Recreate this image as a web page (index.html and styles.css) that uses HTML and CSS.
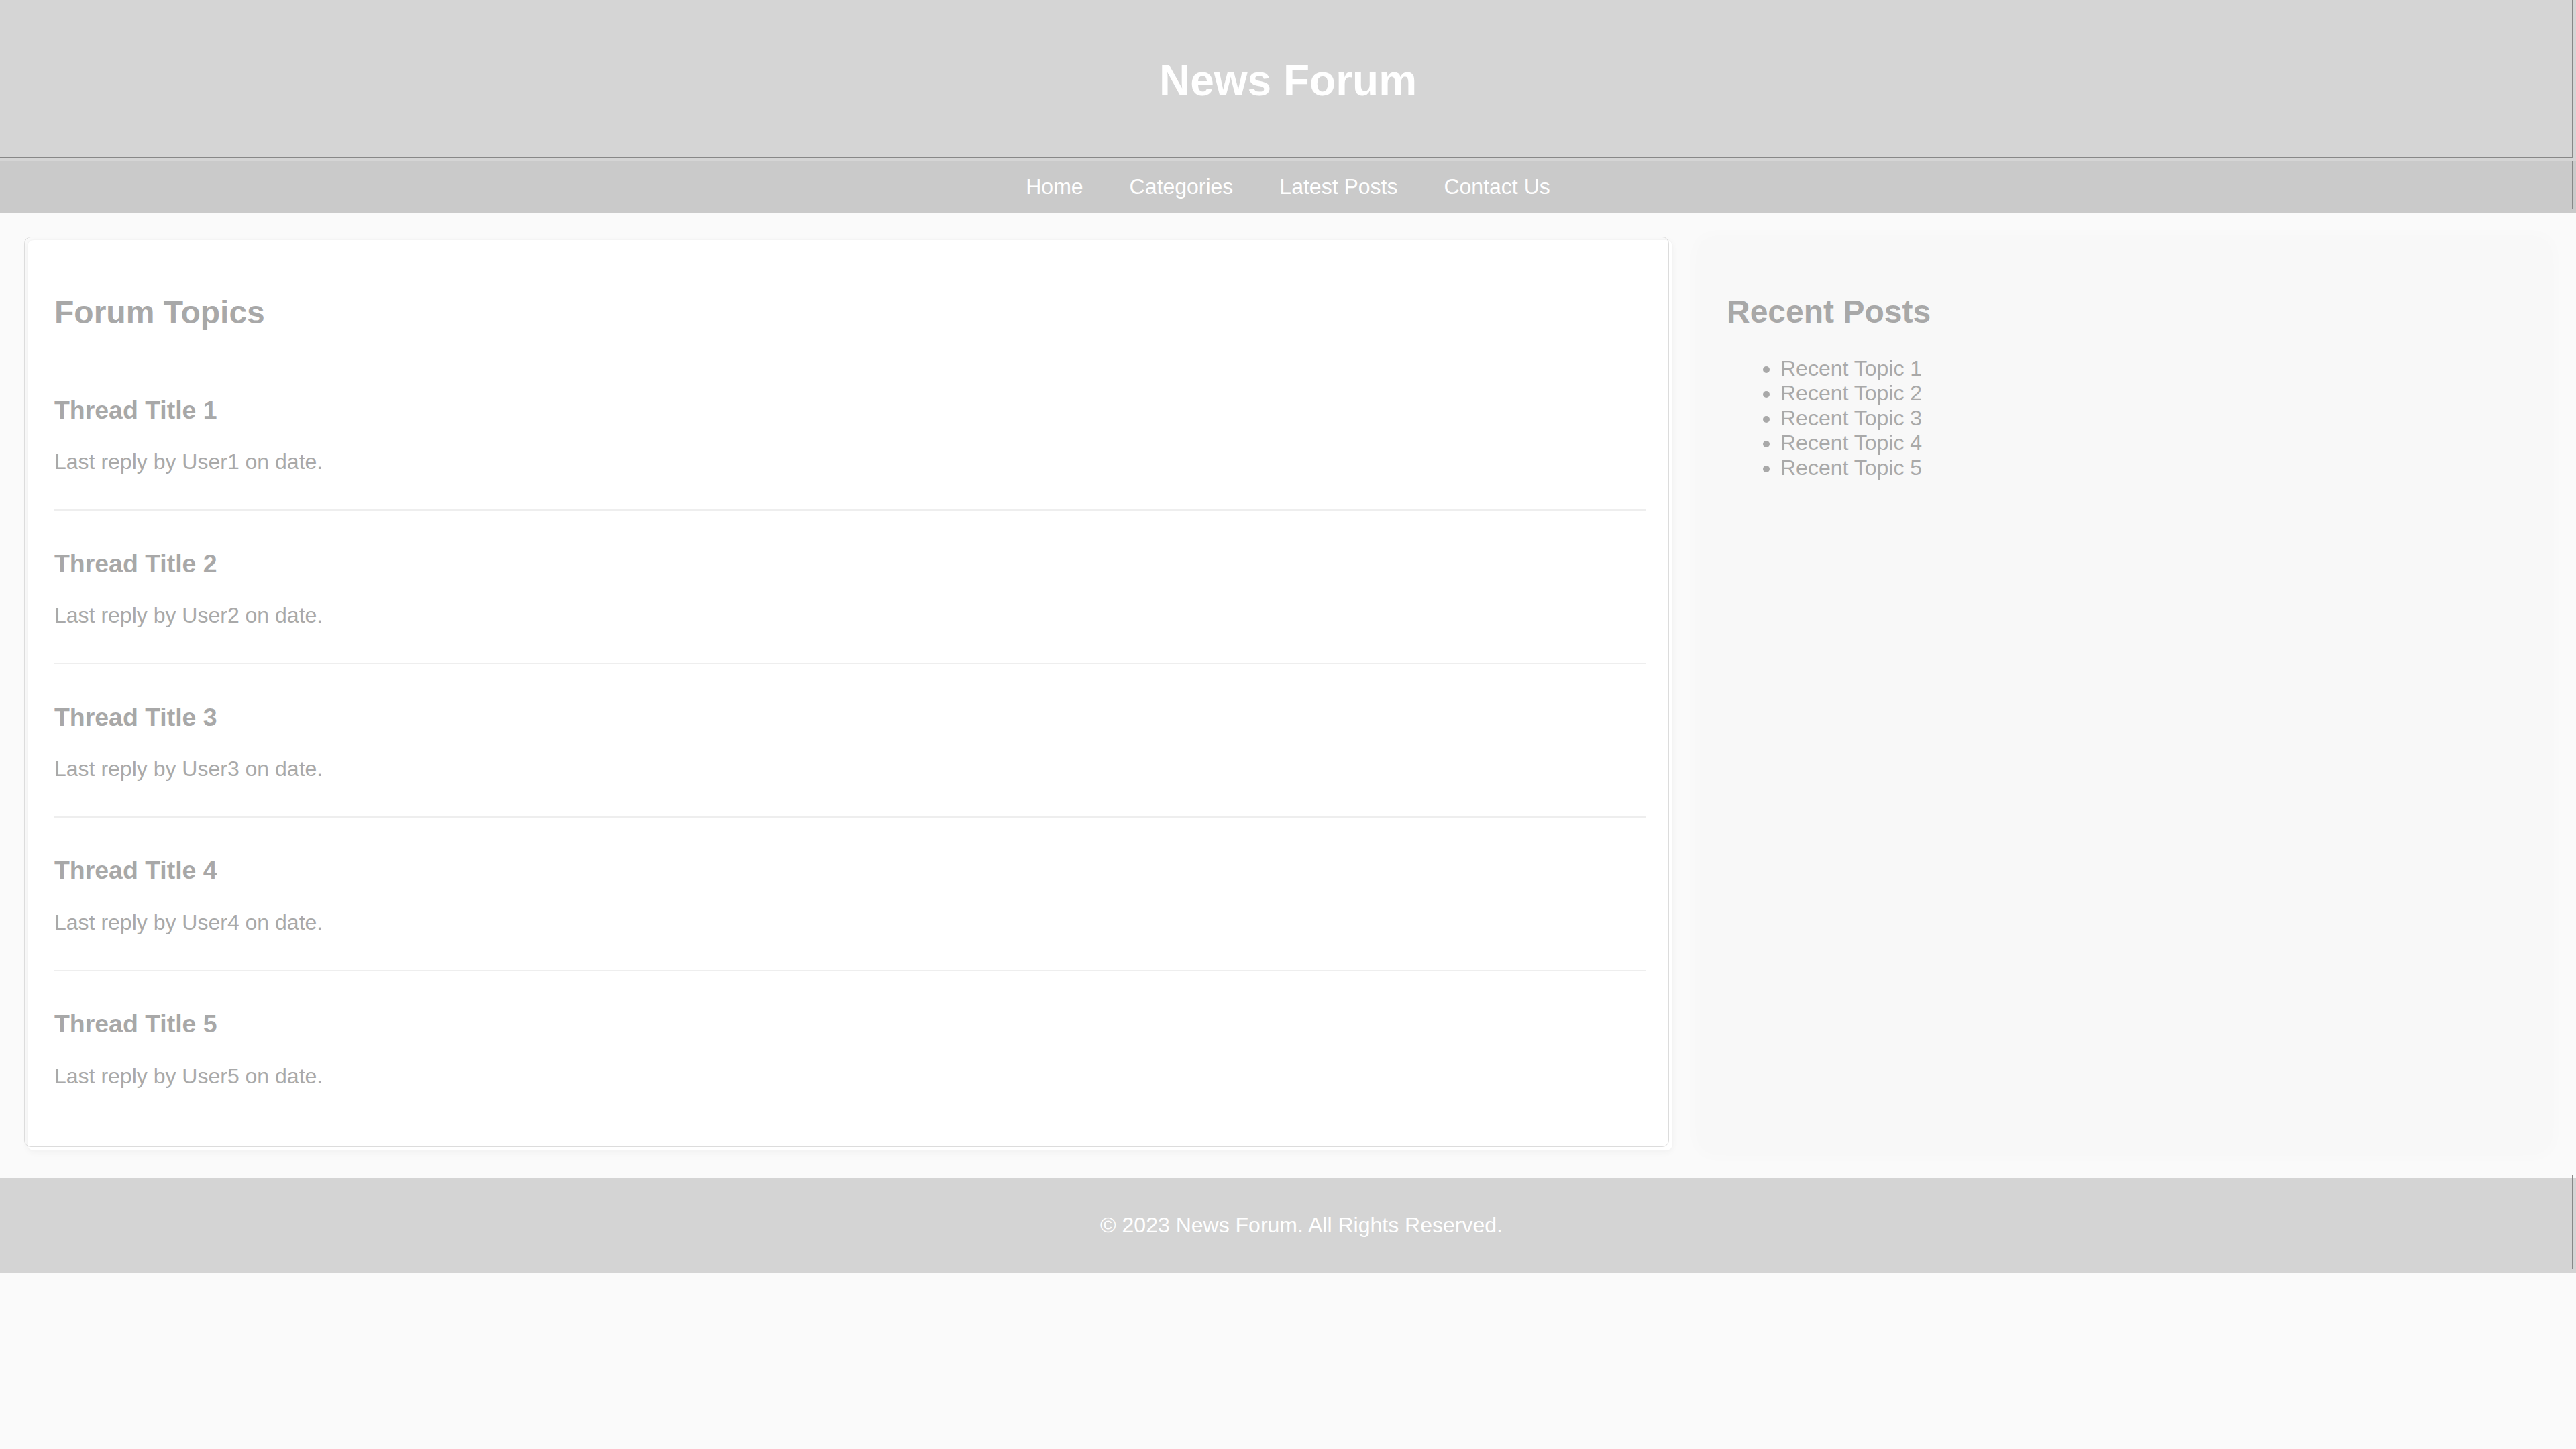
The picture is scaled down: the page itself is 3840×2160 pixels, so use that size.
FILE: index.html
```html
<!DOCTYPE html>
<html lang="en">
<head>
<meta charset="utf-8">
<title>News Forum</title>
<link rel="stylesheet" href="styles.css">
</head>
<body>
<header class="site-header">
  <h1 class="site-title">News Forum</h1>
</header>
<nav class="site-nav">
  <a class="nav-link" href="#">Home</a>
  <a class="nav-link" href="#">Categories</a>
  <a class="nav-link" href="#">Latest Posts</a>
  <a class="nav-link" href="#">Contact Us</a>
</nav>
<main class="layout">
  <section class="topics">
    <h2 class="section-title">Forum Topics</h2>
    <div class="thread">
      <h3 class="thread-title">Thread Title 1</h3>
      <p class="thread-meta">Last reply by User1 on date.</p>
    </div>
    <div class="thread">
      <h3 class="thread-title">Thread Title 2</h3>
      <p class="thread-meta">Last reply by User2 on date.</p>
    </div>
    <div class="thread">
      <h3 class="thread-title">Thread Title 3</h3>
      <p class="thread-meta">Last reply by User3 on date.</p>
    </div>
    <div class="thread">
      <h3 class="thread-title">Thread Title 4</h3>
      <p class="thread-meta">Last reply by User4 on date.</p>
    </div>
    <div class="thread">
      <h3 class="thread-title">Thread Title 5</h3>
      <p class="thread-meta">Last reply by User5 on date.</p>
    </div>
  </section>
  <aside class="sidebar">
    <h2 class="section-title">Recent Posts</h2>
    <ul class="recent-list">
      <li>Recent Topic 1</li>
      <li>Recent Topic 2</li>
      <li>Recent Topic 3</li>
      <li>Recent Topic 4</li>
      <li>Recent Topic 5</li>
    </ul>
  </aside>
</main>
<footer class="site-footer">
  <p class="footer-text">© 2023 News Forum. All Rights Reserved.</p>
</footer>
</body>
</html>
```

FILE: styles.css
```css
html, body {
  margin: 0;
  padding: 0;
}

body {
  background: #fafafa;
  font-family: "Liberation Sans", Arial, Helvetica, sans-serif;
  font-size: 32px;
  color: #aaaaaa;
}

.site-header {
  position: relative;
  background: #d5d5d5;
  padding: 40px;
  text-align: center;
}

.site-header::after {
  content: "";
  position: absolute;
  left: 0;
  top: 0;
  right: 5px;
  bottom: 5px;
  border-right: 1px solid #888888;
  border-bottom: 1px solid #888888;
  pointer-events: none;
}

.site-title {
  margin: 42.88px 0;
  font-size: 64px;
  font-weight: bold;
  color: #ffffff;
}

.site-nav {
  position: relative;
  background: #cacaca;
  padding: 20px;
  display: flex;
  justify-content: center;
  gap: 69px;
}

.site-nav::after {
  content: "";
  position: absolute;
  top: 0;
  bottom: 5px;
  right: 5px;
  width: 1px;
  background: #888888;
}

.nav-link {
  color: #ffffff;
  text-decoration: none;
  font-size: 32px;
}

.layout {
  display: flex;
  align-items: stretch;
  gap: 40px;
  padding: 40px;
}

.topics {
  position: relative;
  flex: 2;
  background: #ffffff;
  border: 1px solid #f4f4f4;
  border-radius: 10px;
  padding: 40px;
  box-shadow: 0 2px 10px rgba(0, 0, 0, 0.04);
}

.topics::before {
  content: "";
  position: absolute;
  left: -5px;
  top: -5px;
  right: 5px;
  bottom: 5px;
  border: 1px solid #dcdcdc;
  border-radius: 10px;
  pointer-events: none;
}

.sidebar {
  flex: 1;
  background: #f8f8f8;
  border-radius: 10px;
  padding: 40px;
  box-shadow: 0 0 30px rgba(0, 0, 0, 0.025);
}

.section-title {
  font-size: 48px;
  font-weight: bold;
  margin: 39.84px 0;
  color: #a8a8a8;
}

.thread {
  padding: 20px 0;
  border-bottom: 2px solid #eeeeee;
}

.thread:last-child {
  border-bottom: none;
}

.thread-title {
  font-size: 37.44px;
  font-weight: bold;
  margin: 37.44px 0;
  color: #a8a8a8;
}

.thread-meta {
  margin: 32px 0;
  color: #a9a9a9;
}

.recent-list {
  margin: 32px 0;
  padding-left: 80px;
  color: #a9a9a9;
}

.site-footer {
  position: relative;
  background: #d4d4d4;
  padding: 20px 20px 20px 60px;
  text-align: center;
  color: #ffffff;
}

.site-footer::after {
  content: "";
  position: absolute;
  top: -5px;
  bottom: 5px;
  right: 5px;
  width: 1px;
  background: #888888;
}

.footer-text {
  margin: 32px 0;
}
```
